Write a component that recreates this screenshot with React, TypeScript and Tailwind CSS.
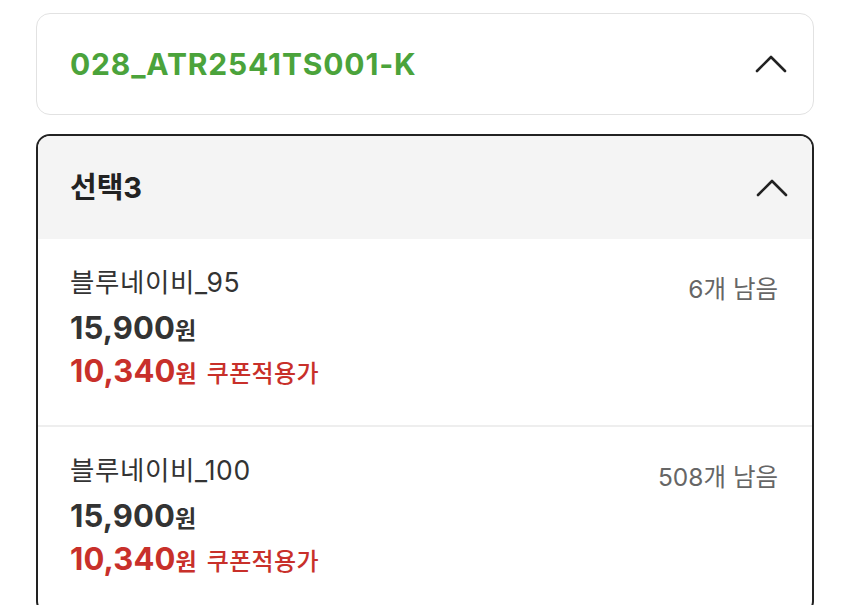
import React from "react";

const font = { fontFamily: '"Inter", "Noto Sans CJK KR", sans-serif' };

function Chevron() {
  return (
    <svg width="32" height="20" viewBox="0 0 32 20" fill="none">
      <path d="M2 17 L16 3 L30 17" stroke="#222" strokeWidth="2.6" strokeLinecap="round" strokeLinejoin="round" />
    </svg>
  );
}

function Item({ name, left }: { name: string; left: string }) {
  return (
    <div className="flex justify-between pl-[32px] pr-[34px] pt-[23px] h-[186px]">
      <div className="flex flex-col">
        <div className="text-[26.5px] leading-[40px] text-[#333] tracking-[0.6px]">{name}</div>
        <div className="mt-[6px] flex items-baseline text-[#333] leading-[40px]">
          <span className="text-[31px] font-bold tracking-[0.1px]">15,900</span>
          <span className="text-[23px] font-bold">원</span>
        </div>
        <div className="mt-[0px] flex items-baseline text-[#c8302a] leading-[40px]">
          <span className="text-[31px] font-bold tracking-[0.1px]">10,340</span>
          <span className="text-[23px] font-bold">원</span>
          <span className="ml-[10px] text-[24px] font-medium tracking-[0.4px]">쿠폰적용가</span>
        </div>
      </div>
      <div className="text-[24.5px] leading-[40px] text-[#666] pt-[7px]">{left}</div>
    </div>
  );
}

export default function App() {
  return (
    <div style={font} className="w-[850px] h-[605px] overflow-hidden bg-white px-[36px] pt-[13px]">
      <div className="h-[102px] rounded-[14px] border border-[#e2e2e2] flex items-center justify-between pl-[33px] pr-[26px]">
        <div className="text-[30px] font-bold text-[#4ba33b] tracking-[0.85px]">028_ATR2541TS001-K</div>
        <Chevron />
      </div>
      <div className="mt-[19px] rounded-[14px] border-2 border-[#222] overflow-hidden">
        <div className="h-[103px] bg-[#f4f4f4] flex items-center justify-between pl-[32px] pr-[24px]">
          <div className="text-[29px] font-bold text-[#222]">선택3</div>
          <Chevron />
        </div>
        <Item name="블루네이비_95" left="6개 남음" />
        <div className="h-[2px] bg-[#eeeeee]" />
        <Item name="블루네이비_100" left="508개 남음" />
      </div>
    </div>
  );
}
